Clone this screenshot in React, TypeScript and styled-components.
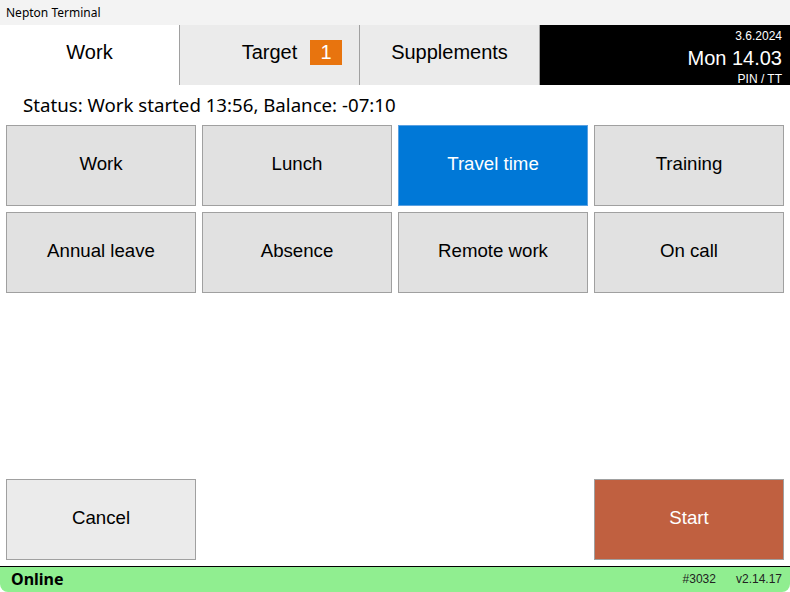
import React from "react";
import styled, { createGlobalStyle } from "styled-components";

const Global = createGlobalStyle`
  html, body { margin: 0; padding: 0; background: #fff; }
  body { font-family: "Liberation Sans", Arial, sans-serif; }
`;

const Window = styled.div`
  width: 790px;
  height: 592px;
  display: flex;
  flex-direction: column;
  background: #fff;
  overflow: hidden;
  color: #000;
`;

const TitleBar = styled.div`
  height: 25px;
  flex: none;
  background: #f3f3f3;
  display: flex;
  align-items: center;
  padding-left: 6px;
  font-size: 12px;
  font-family: "Noto Sans", "Liberation Sans", sans-serif;
`;

const TabRow = styled.div`
  height: 60px;
  flex: none;
  display: grid;
  grid-template-columns: 180px 180px 180px 1fr;
  overflow: hidden;
`;

const Tab = styled.div<{ $active?: boolean }>`
  position: relative;
  display: flex;
  align-items: center;
  justify-content: center;
  padding-bottom: 5px;
  font-size: 20px;
  background: ${(p) => (p.$active ? "#ffffff" : "#ebebeb")};
  border-right: 1px solid #a0a0a0;
`;

const Badge = styled.span`
  position: absolute;
  right: 17px;
  top: 15px;
  width: 32px;
  height: 25px;
  background: #e8740e;
  color: #fff;
  display: flex;
  align-items: center;
  justify-content: center;
  font-size: 20px;
`;

const Clock = styled.div`
  background: #000;
  color: #fff;
  display: flex;
  flex-direction: column;
  align-items: flex-end;
  padding: 4px 8px 0 0;
  box-sizing: border-box;
  height: 60px;
`;

const SmallLine = styled.div`
  font-size: 12px;
  line-height: 14px;
`;

const BigLine = styled.div`
  font-size: 20px;
  line-height: 26px;
  margin: 2px 0 1px;
`;

const Status = styled.div`
  height: 40px;
  flex: none;
  display: flex;
  align-items: center;
  padding-left: 23px;
  padding-bottom: 2px;
  box-sizing: border-box;
  font-size: 18.67px;
  font-family: "Noto Sans", "Liberation Sans", sans-serif;
`;

const Grid = styled.div`
  display: grid;
  grid-template-columns: repeat(4, 190px);
  grid-auto-rows: 81px;
  gap: 6px;
  padding: 0 6px;
`;

const Button = styled.div<{ $bg?: string; $fg?: string; $border?: string }>`
  box-sizing: border-box;
  display: flex;
  align-items: center;
  justify-content: center;
  padding-bottom: 4px;
  background: ${(p) => p.$bg || "#e1e1e1"};
  color: ${(p) => p.$fg || "#000"};
  border: 1px solid ${(p) => p.$border || "#a0a0a0"};
  font-size: 18.67px;
`;

const Spacer = styled.div`
  flex: 1;
`;

const BottomRow = styled.div`
  display: flex;
  justify-content: space-between;
  padding: 0 6px;
  height: 81px;
  flex: none;
  margin-bottom: 6px;
  & > * { width: 190px; }
`;

const StatusBar = styled.div`
  height: 26px;
  box-sizing: border-box;
  flex: none;
  border-top: 1px solid #000;
  background: #90ee90;
  display: flex;
  align-items: center;
  padding: 0 8px 2px 11px;
  border-radius: 0 0 8px 8px;
`;

const Online = styled.span`
  font-weight: bold;
  font-size: 16px;
  font-family: "Noto Sans", "Liberation Sans", sans-serif;
  flex: 1;
`;

const Meta = styled.span`
  font-size: 12px;
  color: #222;
  margin-left: 20px;
`;

const items: { label: string; active?: boolean }[] = [
  { label: "Work" },
  { label: "Lunch" },
  { label: "Travel time", active: true },
  { label: "Training" },
  { label: "Annual leave" },
  { label: "Absence" },
  { label: "Remote work" },
  { label: "On call" },
];

export default function App() {
  return (
    <>
      <Global />
      <Window>
        <TitleBar>Nepton Terminal</TitleBar>
        <TabRow>
          <Tab $active>Work</Tab>
          <Tab>
            Target
            <Badge>1</Badge>
          </Tab>
          <Tab>Supplements</Tab>
          <Clock>
            <SmallLine>3.6.2024</SmallLine>
            <BigLine>Mon 14.03</BigLine>
            <SmallLine>PIN / TT</SmallLine>
          </Clock>
        </TabRow>
        <Status>Status: Work started 13:56, Balance: -07:10</Status>
        <Grid>
          {items.map((it) =>
            it.active ? (
              <Button key={it.label} $bg="#0078d7" $fg="#fff" $border="#5aa0e0">
                {it.label}
              </Button>
            ) : (
              <Button key={it.label}>{it.label}</Button>
            )
          )}
        </Grid>
        <Spacer />
        <BottomRow>
          <Button $bg="#ebebeb">Cancel</Button>
          <Button $bg="#c06040" $fg="#fff">Start</Button>
        </BottomRow>
        <StatusBar>
          <Online>Online</Online>
          <Meta>#3032</Meta>
          <Meta>v2.14.17</Meta>
        </StatusBar>
      </Window>
    </>
  );
}
